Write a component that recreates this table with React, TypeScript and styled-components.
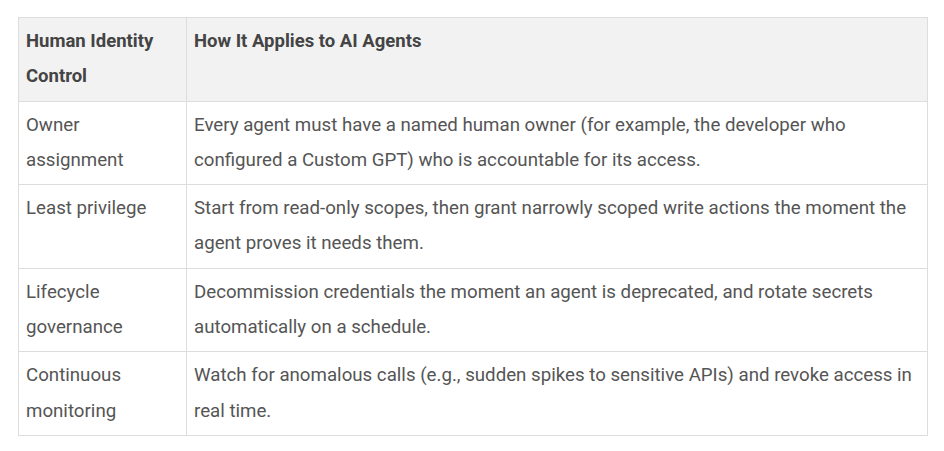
import * as React from 'react';
import styled, { createGlobalStyle } from 'styled-components';

const GlobalStyle = createGlobalStyle`
  body {
    margin: 0;
    background: #ffffff;
    font-family: Roboto, "Liberation Sans", Arial, sans-serif;
  }
`

const Page = styled.div`
  padding: 17px 0 0 18px;
`

const Table = styled.table`
  width: 910px;
  border-collapse: collapse;
  font-size: 18.7px;
  line-height: 35.3px;
  color: #555555;
`

const HeadCell = styled.th<{ $first?: boolean }>`
  background: #f2f2f2;
  color: #444444;
  font-size: 18.5px;
  font-weight: 700;
  text-align: left;
  vertical-align: top;
  border: 1px solid #dddddd;
  padding: 6px 8px 6px 7px;
  width: ${(p) => (p.$first ? '152px' : 'auto')};
`

const Cell = styled.td<{ $first?: boolean }>`
  vertical-align: top;
  border: 1px solid #dddddd;
  padding: 6px 8px 6px 7px;
  width: ${(p) => (p.$first ? '152px' : 'auto')};
`

interface IRow {
  control: string;
  applies: string;
}

const rows: IRow[] = [
  {
    control: 'Owner assignment',
    applies: 'Every agent must have a named human owner (for example, the developer who configured a Custom GPT) who is accountable for its access.',
  },
  {
    control: 'Least privilege',
    applies: 'Start from read-only scopes, then grant narrowly scoped write actions the moment the agent proves it needs them.',
  },
  {
    control: 'Lifecycle governance',
    applies: 'Decommission credentials the moment an agent is deprecated, and rotate secrets automatically on a schedule.',
  },
  {
    control: 'Continuous monitoring',
    applies: 'Watch for anomalous calls (e.g., sudden spikes to sensitive APIs) and revoke access in real time.',
  },
];

const App: React.FunctionComponent = () => {
  return (
    <Page>
      <GlobalStyle />
      <Table>
        <thead>
          <tr>
            <HeadCell $first>Human Identity Control</HeadCell>
            <HeadCell>How It Applies to AI Agents</HeadCell>
          </tr>
        </thead>
        <tbody>
          {rows.map((r) => (
            <tr key={r.control}>
              <Cell $first>{r.control}</Cell>
              <Cell>{r.applies}</Cell>
            </tr>
          ))}
        </tbody>
      </Table>
    </Page>
  );
};

export default App;
